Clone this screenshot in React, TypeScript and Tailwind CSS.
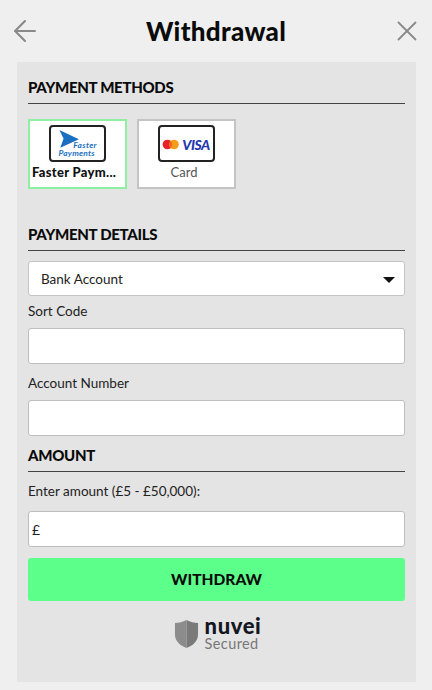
import { ArrowLeft, X } from "lucide-react";

function FasterLogo() {
  return (
    <svg viewBox="0 0 57 36" className="w-[57px] h-[36px]">
      <path d="M9 3 L30 13 L10 22 L13.5 12 Z" fill="#1a6fc0" />
      <text x="24" y="22.5" textLength="25" fontSize="9" fontStyle="italic" fontWeight="700" fill="#1a6fc0" fontFamily="Lato, sans-serif">
        Faster
      </text>
      <text x="8" y="31" textLength="39" fontSize="9" fontStyle="italic" fontWeight="700" fill="#1a6fc0" fontFamily="Lato, sans-serif">
        Payments
      </text>
    </svg>
  );
}

function CardLogo() {
  return (
    <svg viewBox="0 0 57 36" className="w-[57px] h-[36px]">
      <circle cx="8" cy="18.5" r="5.2" fill="#e8202a" />
      <circle cx="15" cy="18.5" r="5.2" fill="#f59e1c" />
      <path d="M11.5 14.7 a5.2 5.2 0 0 1 0 7.6 a5.2 5.2 0 0 1 0 -7.6 Z" fill="#f2641f" />
      <text x="24" y="24" textLength="30" fontSize="15" fontStyle="italic" fontWeight="900" fill="#2438b0" fontFamily="Lato, sans-serif">
        VISA
      </text>
    </svg>
  );
}

function SectionTitle({ children }: { children: string }) {
  return (
    <div className="border-b-[1.5px] border-[#444] h-[27px] text-[15px] leading-[20px] tracking-[-0.3px] font-black text-[#0b0b0b]">
      {children}
    </div>
  );
}

function TextBox({ value }: { value?: string }) {
  return (
    <div className="h-[36px] bg-white rounded-[3px] border-[1.5px] border-[#bdbdbd] pl-[3px] flex items-center text-[14px] text-[#222]">
      {value}
    </div>
  );
}

export default function App() {
  return (
    <div className="w-[432px] h-[690px] bg-[#efefef] overflow-hidden font-['Lato',sans-serif]">
      {/* Header */}
      <div className="h-[62px] flex items-center justify-between pl-[8px] pr-[8px]">
        <ArrowLeft size={34} strokeWidth={1.5} className="text-[#8a8a8a]" />
        <div className="text-[26px] leading-[30px] font-black text-[#0b0b0b] tracking-[0.3px]">Withdrawal</div>
        <X size={34} strokeWidth={1.3} className="text-[#8a8a8a]" />
      </div>

      <div className="mx-[17px] h-[620px] w-[399px] bg-[#e4e4e4] px-[11px] pt-[15px]">
        <SectionTitle>PAYMENT METHODS</SectionTitle>

        {/* Method cards */}
        <div className="flex gap-[10px] mt-[15px]">
          <div className="w-[99px] h-[70px] bg-white border-2 border-[#8ff0a4] flex flex-col items-center pt-[4px]">
            <div className="w-[57px] h-[37px] shrink-0 border-2 border-[#222] rounded-[4px] overflow-hidden flex items-center justify-center">
              <FasterLogo />
            </div>
            <div className="self-start ml-[2px] text-[13px] leading-[18px] mt-[1px] font-black text-[#111] tracking-[0.3px] whitespace-nowrap">Faster Paym...</div>
          </div>
          <div className="w-[99px] h-[70px] bg-white border-2 border-[#c4c4c4] flex flex-col items-center pt-[4px]">
            <div className="w-[57px] h-[37px] shrink-0 border-2 border-[#222] rounded-[4px] overflow-hidden flex items-center justify-center">
              <CardLogo />
            </div>
            <div className="mr-[5px] text-[13px] leading-[18px] mt-[1px] text-[#555]">Card</div>
          </div>
        </div>

        <div className="mt-[35px]">
          <SectionTitle>PAYMENT DETAILS</SectionTitle>
        </div>

        <div className="mt-[10px] h-[35px] bg-white rounded-[3px] border border-[#c4c4c4] pl-[12px] pr-[9px] pt-[2px] flex items-center justify-between text-[13.5px] text-[#222]">
          <span>Bank Account</span>
          <span className="w-0 h-0 border-l-[6px] border-r-[6px] border-t-[6px] border-l-transparent border-r-transparent border-t-[#111]" />
        </div>

        <div className="mt-[5px] mb-[7px] text-[13.5px] leading-[20px] text-[#222]">Sort Code</div>
        <TextBox />

        <div className="mt-[9px] mb-[7px] text-[13.5px] leading-[20px] text-[#222]">Account Number</div>
        <TextBox />

        <div className="mt-[9px]">
          <SectionTitle>AMOUNT</SectionTitle>
        </div>

        <div className="mt-[9px] mb-[10px] text-[13.5px] leading-[20px] text-[#222]">Enter amount (£5 - £50,000):</div>
        <TextBox value="£" />

        <div className="mt-[11px] h-[43px] rounded-[3px] bg-[#5dff8b] flex items-center justify-center text-[15.5px] font-black text-[#0b0b0b]">
          WITHDRAW
        </div>

        {/* Nuvei badge */}
        <div className="mt-[16px] ml-[2px] flex items-center justify-center gap-[6px]">
          <svg viewBox="0 0 26 31" className="w-[25px] h-[30px]">
            <path d="M13 1 C9 3 5 4 1 4 L1 16 C1 23 7 28 13 30 Z" fill="#8c8c8c" />
            <path d="M13 1 C17 3 21 4 25 4 L25 16 C25 23 19 28 13 30 Z" fill="#7a7a7a" />
          </svg>
          <div className="flex flex-col">
            <div className="text-[22px] leading-[18px] font-black tracking-[0.6px] text-[#14171f]">nuvei</div>
            <div className="text-[14.5px] leading-[15px] mt-[1px] text-[#777] tracking-[0.4px]">Secured</div>
          </div>
        </div>
      </div>
    </div>
  );
}
